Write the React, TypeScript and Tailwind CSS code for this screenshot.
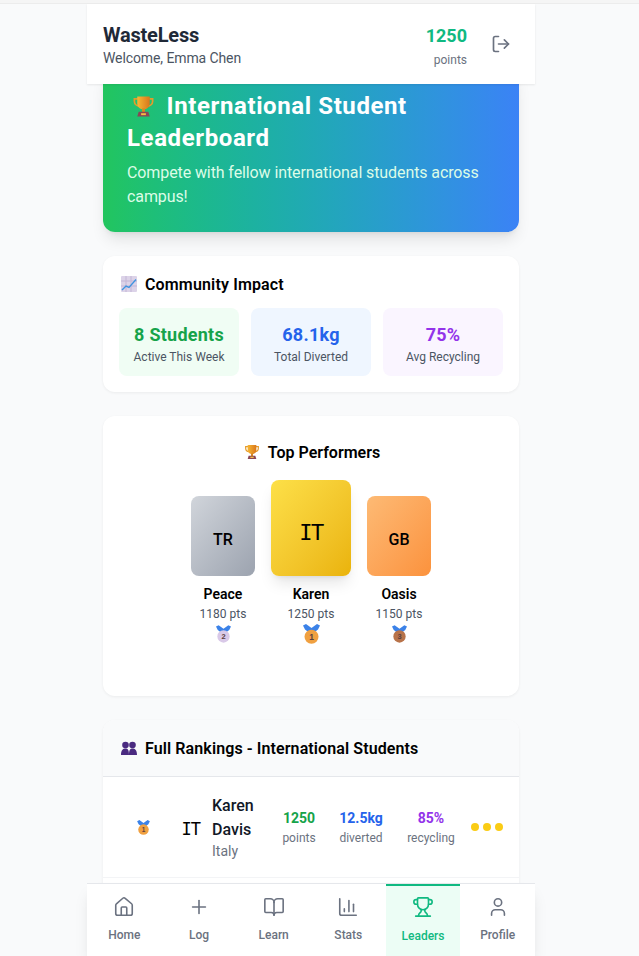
import React from 'react';
import { BarChart3, BookOpen, Home, LogOut, Plus, Trophy, User } from 'lucide-react';

const TrophyEmoji = ({ size }: { size: number }) => (
  <svg width={size} height={size} viewBox="0 0 24 24" className="inline-block shrink-0">
    <defs>
      <linearGradient id="gold" x1="0" x2="1" y1="0" y2="0">
        <stop offset="0" stopColor="#f7b733" />
        <stop offset="1" stopColor="#d9771c" />
      </linearGradient>
    </defs>
    <path d="M6 4H2.500v2.500c0 3 2.500 5 5.500 5M18 4h3.500v2.500c0 3-2.500 5-5.500 5" fill="none" stroke="#e59a2a" strokeWidth="1.800" />
    <path d="M5.500 1.500h13v7c0 4-3 6.500-6.500 6.500s-6.500-2.500-6.500-6.500z" fill="url(#gold)" />
    <rect x="10.500" y="14" width="3" height="4" fill="#d9881f" />
    <path d="M7 17.500h10l1.500 5h-13z" fill="#8a4655" />
    <rect x="9.500" y="19" width="5" height="2" fill="#f2bd45" />
  </svg>
);

const ChartEmoji = () => (
  <svg width={16} height={16} viewBox="0 0 16 16" className="shrink-0">
    <rect width="16" height="16" rx="1" fill="#dcd3e8" />
    <path d="M0 5h16M0 10h16M5 0v16M10 0v16" stroke="#c3b6d6" strokeWidth="1" />
    <path d="M1 14l4-4 3 1.500 7-8" fill="none" stroke="#3f94e0" strokeWidth="1.400" />
  </svg>
);

const PeopleEmoji = () => (
  <svg width={16} height={16} viewBox="0 0 16 16" className="shrink-0">
    <circle cx="4.500" cy="5" r="3.300" fill="#4a2a80" />
    <circle cx="11.500" cy="5" r="3.300" fill="#4a2a80" />
    <path d="M0 15c0-5 2-6.500 4.500-6.500S8 10 8 15zM8 15c0-5 1-6.500 3.500-6.500S16 10 16 15z" fill="#4a2a80" />
  </svg>
);

const Medal = ({ n, color, w, h }: { n: number; color: string; w: number; h: number }) => (
  <svg width={w} height={h} viewBox="0 0 17 20" className="shrink-0">
    <path d="M0 1.500l3-1.500 5.500 4L14 0l3 1.500-2 4-4 3H6L2 5.500z" fill="#3b82e8" />
    <circle cx="8.500" cy="12.800" r="7" fill={color} />
    <text x="8.500" y="16" textAnchor="middle" fontSize="8.500" fontWeight="700" fill="#5a4040" fontFamily="Liberation Sans, sans-serif">
      {n}
    </text>
  </svg>
);

const stats = [
  { value: '8 Students', label: 'Active This Week', box: 'bg-[#f0fdf4]', text: 'text-[#16a34a]' },
  { value: '68.1kg', label: 'Total Diverted', box: 'bg-[#eff6ff]', text: 'text-[#2563eb]' },
  { value: '75%', label: 'Avg Recycling', box: 'bg-[#faf5ff]', text: 'text-[#9333ea]' },
];

const tabs = [
  { label: 'Home', icon: Home },
  { label: 'Log', icon: Plus },
  { label: 'Learn', icon: BookOpen },
  { label: 'Stats', icon: BarChart3 },
  { label: 'Leaders', icon: Trophy, active: true },
  { label: 'Profile', icon: User },
];

export default function App() {
  return (
    <div className="flex h-[956px] flex-col overflow-hidden bg-[#f9fafb] font-['Roboto','Noto_Sans',sans-serif]">
      <div className="h-1 shrink-0 border-b border-[#ececec] bg-[#f5f5f5]" />
      <div className="min-h-0 flex-1 pr-[17px]">
        <div className="mx-auto flex h-full w-[448px] flex-col">
          <header className="relative z-10 flex h-20 shrink-0 items-center justify-between bg-white px-4 shadow-[0_1px_2px_rgba(0,0,0,0.08)]">
            <div>
              <h1 className="-mb-px pt-px text-xl leading-7 font-bold tracking-[-0.2px] text-[#1f2937]">WasteLess</h1>
              <p className="text-sm leading-5 tracking-[-0.1px] text-[#4b5563]">Welcome, Emma Chen</p>
            </div>
            <div className="flex items-center gap-4">
              <div className="pt-1 text-right">
                <div className="text-lg leading-7 font-bold text-[#10b981]">1250</div>
                <div className="text-xs leading-5 text-[#6b7280]">points</div>
              </div>
              <button className="p-2 text-[#6b7280]">
                <LogOut size={20} strokeWidth={2} />
              </button>
            </div>
          </header>

          <main className="min-h-0 flex-1 overflow-hidden px-4">
            <section className="-mt-[18px] rounded-xl bg-gradient-to-r from-[#22c55e] to-[#3b82f6] px-6 pt-6 pb-[23px] text-white shadow-lg">
              <h2 className="text-2xl leading-8 font-bold tracking-[0.6px]">
                <span className="inline-flex w-[33px] justify-center align-[-4px]">
                  <TrophyEmoji size={23} />
                </span>{' '}
                International Student Leaderboard
              </h2>
              <p className="mt-[7px] text-base leading-6 tracking-[-0.1px] text-[#dcfce7]">
                Compete with fellow international students across campus!
              </p>
            </section>

            <section className="mt-6 rounded-xl bg-white p-4 shadow-[0_1px_3px_rgba(0,0,0,0.06)]">
              <h3 className="flex h-6 items-center gap-2 pl-0.5 text-base leading-6 font-semibold tracking-[0.15px] text-black">
                <ChartEmoji />
                <span className="pt-0.5">Community Impact</span>
              </h3>
              <div className="mt-3 grid grid-cols-3 gap-3">
                {stats.map((s) => (
                  <div key={s.label} className={`rounded-lg ${s.box} px-3 pt-[13px] pb-[11px] text-center`}>
                    <div className={`text-lg leading-7 font-bold tracking-[0.25px] ${s.text}`}>{s.value}</div>
                    <div className="text-xs leading-4 whitespace-nowrap text-[#4b5563]">{s.label}</div>
                  </div>
                ))}
              </div>
            </section>

            <section className="mt-6 h-[280px] rounded-xl bg-white p-6 shadow-[0_1px_3px_rgba(0,0,0,0.06)]">
              <h3 className="flex h-6 items-center justify-center gap-2 pl-0.5 text-base leading-6 font-semibold text-black">
                <TrophyEmoji size={16} />
                <span className="pt-0.5">Top Performers</span>
              </h3>
              <div className="mt-4 flex items-end justify-center gap-4">
                <Podium code="TR" name="Peace" pts="1180 pts" wrap="w-16" box="h-20 w-16 from-[#d1d5db] to-[#9ca3af]" text="text-base font-medium" medal={<Medal n={2} color="#d9c9e8" w={15} h={18} />} />
                <Podium code="IT" name="Karen" pts="1250 pts" wrap="w-20" box="h-24 w-20 from-[#fde047] to-[#eab308] shadow-lg" text="font-['DejaVu_Sans_Mono',monospace] text-[22px] tracking-[-1.5px]" medal={<Medal n={1} color="#f0a040" w={17} h={20} />} />
                <Podium code="GB" name="Oasis" pts="1150 pts" wrap="w-16" box="h-20 w-16 from-[#fdba74] to-[#fb923c]" text="text-base font-medium" medal={<Medal n={3} color="#b8734a" w={15} h={18} />} />
              </div>
            </section>

            <section className="mt-6 h-[240px] rounded-xl bg-white shadow-[0_1px_3px_rgba(0,0,0,0.06)]">
              <div className="rounded-t-xl border-b border-[#e5e7eb] bg-[#f9fafb] px-4 py-4">
                <h3 className="flex h-6 items-center gap-2 pl-0.5 text-base leading-6 font-semibold tracking-[0.1px] text-black">
                  <PeopleEmoji />
                  <span className="pt-0.5">Full Rankings - International Students</span>
                </h3>
              </div>
              <div className="flex items-center border-b border-[#f3f4f6] px-4 py-4">
                <div className="flex w-12 justify-center">
                  <Medal n={1} color="#f0a040" w={13} h={15} />
                </div>
                <div className="w-[45px] pt-1.5 pr-3 text-right font-['DejaVu_Sans_Mono',monospace] text-[17px] tracking-[-1px] text-black">IT</div>
                <div className="w-[58px] pt-px">
                  <div className="-mb-px text-base leading-6 font-medium text-[#111827]">Karen Davis</div>
                  <div className="text-sm leading-5 text-[#6b7280]">Italy</div>
                </div>
                <Metric value="1250" label="points" color="text-[#16a34a]" width="w-[58px]" />
                <Metric value="12.5kg" label="diverted" color="text-[#2563eb]" width="w-[66px]" />
                <Metric value="85%" label="recycling" color="text-[#9333ea]" width="w-[74px]" />
                <div className="ml-auto flex gap-1">
                  <span className="h-2 w-2 rounded-full bg-[#facc15]" />
                  <span className="h-2 w-2 rounded-full bg-[#facc15]" />
                  <span className="h-2 w-2 rounded-full bg-[#facc15]" />
                </div>
              </div>
            </section>
          </main>

          <nav className="relative z-10 grid h-[73px] shrink-0 grid-cols-6 border-t border-[#e5e7eb] bg-white shadow-lg">
            {tabs.map((t) => {
              const Icon = t.icon;
              return (
                <div
                  key={t.label}
                  className={`flex flex-col items-center ${t.active ? 'border-t-2 border-[#10b981] bg-[#ecfdf5] pt-2.5 text-[#10b981]' : 'pt-3 text-[#6b7280]'}`}
                >
                  <Icon size={22} strokeWidth={1.75} />
                  <span className={`text-xs leading-4 font-medium ${t.active ? 'mt-2.5' : 'mt-[9px]'}`}>{t.label}</span>
                </div>
              );
            })}
          </nav>
        </div>
      </div>
    </div>
  );
}

function Podium({ code, name, pts, wrap, box, text, medal }: { code: string; name: string; pts: string; wrap: string; box: string; text: string; medal: React.ReactNode }) {
  return (
    <div className={`flex ${wrap} flex-col items-center`}>
      <div className={`flex items-center justify-center rounded-lg bg-gradient-to-br ${box} ${text} pt-2 text-black`}>{code}</div>
      <div className="mt-2 text-sm leading-5 font-semibold text-black">{name}</div>
      <div className="text-xs leading-5 whitespace-nowrap text-[#4b5563]">{pts}</div>
      <div className="flex h-5 items-center">{medal}</div>
    </div>
  );
}

function Metric({ value, label, color, width }: { value: string; label: string; color: string; width: string }) {
  return (
    <div className={`${width} text-center`}>
      <div className={`text-sm leading-5 font-bold ${color}`}>{value}</div>
      <div className="mt-0.5 text-xs leading-4 text-[#6b7280]">{label}</div>
    </div>
  );
}
